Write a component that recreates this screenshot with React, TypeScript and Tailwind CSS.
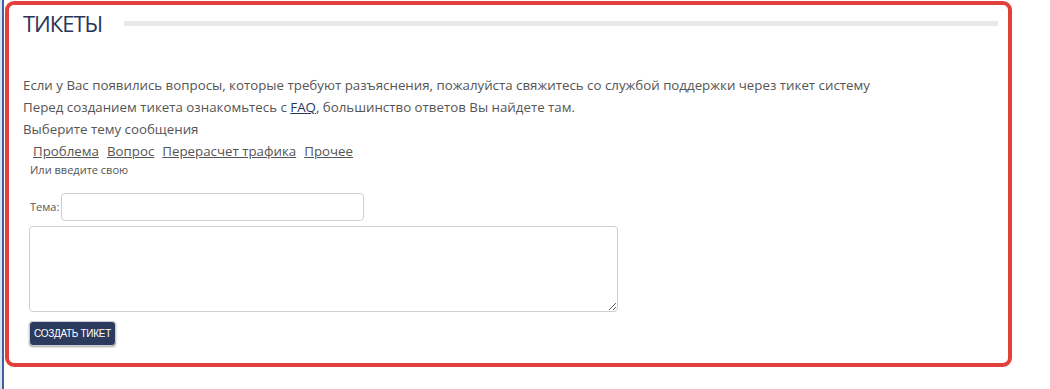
const TOPICS = ["Проблема", "Вопрос", "Перерасчет трафика", "Прочее"];

export default function App() {
  return (
    <div
      className="flex h-[389px] w-[1050px] overflow-hidden bg-white text-[#555]"
      style={{ fontFamily: '"Open Sans", "Noto Sans", sans-serif' }}
    >
      {/* left frame edge */}
      <div className="w-[2px] bg-[#dde4ee]" />
      <div className="w-[2px] bg-[#3f5f9e]" />

      <div className="pl-[1px] pt-[1px]">
        <div className="h-[366px] w-[1007px] rounded-[9px] border-4 border-[#e2413b] bg-white pl-[14px] pr-[10px] pt-[5px]">
          {/* header */}
          <div className="flex items-center">
            <h1 className="text-[22px] leading-[26px] tracking-[-1px] text-[#27365a]">ТИКЕТЫ</h1>
            <div className="ml-[22px] mt-[1px] h-[5px] flex-1 bg-[#e9e9e9]" />
          </div>

          <div className="mt-[38px] text-[13.3px] leading-[22px]">
            <p>
              Если у Вас появились вопросы, которые требуют разъяснения, пожалуйста свяжитесь со службой поддержки
              через тикет систему
            </p>
            <p>
              Перед созданием тикета ознакомьтесь с{" "}
              <a href="#" className="text-[#27365a] underline">
                FAQ
              </a>
              , большинство ответов Вы найдете там.
            </p>
            <p>Выберите тему сообщения</p>
            <div className="ml-[10px] flex gap-[8px]">
              {TOPICS.map((t) => (
                <a key={t} href="#" className="text-[#555] underline">
                  {t}
                </a>
              ))}
            </div>
          </div>

          <div className="ml-[7px]">
            <p className="text-[11px] leading-[16px]">Или введите свою</p>

            <div className="mt-[15px] flex items-center gap-[2px]">
              <label className="text-[11px]">Тема:</label>
              <input
                type="text"
                className="h-[28px] w-[303px] rounded-[4px] border border-[#cfcfcf] bg-white px-2 text-[13px] outline-none"
              />
            </div>

            <textarea className="-ml-[1px] mt-[5px] block h-[86px] w-[589px] rounded-[4px] border border-[#cfcfcf] bg-white p-2 text-[13px] outline-none" />

            <button
              className="-ml-[1px] mt-[9px] h-[25px] w-[87px] rounded-[4px] border border-[#c8ccd6] bg-[#2c3a5e] text-[10px] tracking-[-0.3px] text-white shadow-[0_1px_2px_rgba(0,0,0,0.35)]"
              style={{ fontFamily: '"Liberation Sans", Arial, sans-serif' }}
            >
              СОЗДАТЬ ТИКЕТ
            </button>
          </div>
        </div>
      </div>
    </div>
  );
}
